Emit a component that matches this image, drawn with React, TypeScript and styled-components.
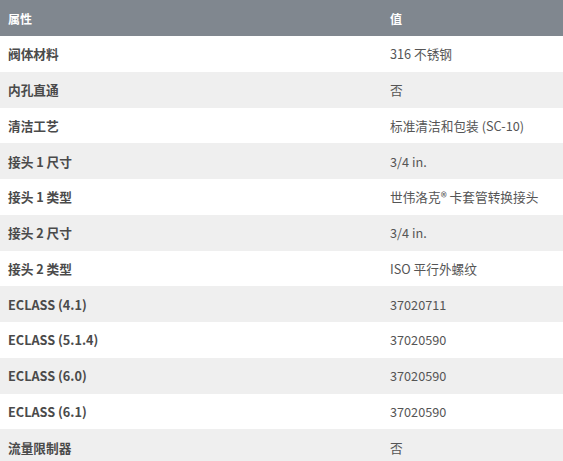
import React from "react";
import styled, { createGlobalStyle } from "styled-components";

const Global = createGlobalStyle`
  html, body { margin: 0; padding: 0; background: #ffffff; }
  body { font-family: "Noto Sans CJK SC", "Noto Sans", sans-serif; }
`;

const Table = styled.div`
  width: 563px;
  display: grid;
  grid-template-columns: 382px 1fr;
`;

const HeadCell = styled.div`
  height: 36px;
  background: #80878f;
  color: #ffffff;
  font-size: 12px;
  font-weight: 700;
  display: flex;
  align-items: center;
  padding-left: 8px;
`;

const Cell = styled.div<{ $alt: boolean; $bold?: boolean }>`
  height: 35.75px;
  background: ${(p) => (p.$alt ? "#efefef" : "#ffffff")};
  color: ${(p) => (p.$bold ? "#4a4a4a" : "#555555")};
  font-size: 12.7px;
  font-weight: ${(p) => (p.$bold ? 700 : 400)};
  display: flex;
  align-items: center;
  padding-left: 8px;
  white-space: nowrap;
`;

const rows: [string, string][] = [
  ["阀体材料", "316 不锈钢"],
  ["内孔直通", "否"],
  ["清洁工艺", "标准清洁和包装 (SC-10)"],
  ["接头 1 尺寸", "3/4 in."],
  ["接头 1 类型", "世伟洛克® 卡套管转换接头"],
  ["接头 2 尺寸", "3/4 in."],
  ["接头 2 类型", "ISO 平行外螺纹"],
  ["ECLASS (4.1)", "37020711"],
  ["ECLASS (5.1.4)", "37020590"],
  ["ECLASS (6.0)", "37020590"],
  ["ECLASS (6.1)", "37020590"],
  ["流量限制器", "否"],
];

export default function App() {
  return (
    <>
      <Global />
      <Table>
        <HeadCell>属性</HeadCell>
        <HeadCell>值</HeadCell>
        {rows.map(([k, v], i) => (
          <React.Fragment key={k}>
            <Cell $alt={i % 2 === 1} $bold>
              {k}
            </Cell>
            <Cell $alt={i % 2 === 1}>{v}</Cell>
          </React.Fragment>
        ))}
      </Table>
    </>
  );
}
